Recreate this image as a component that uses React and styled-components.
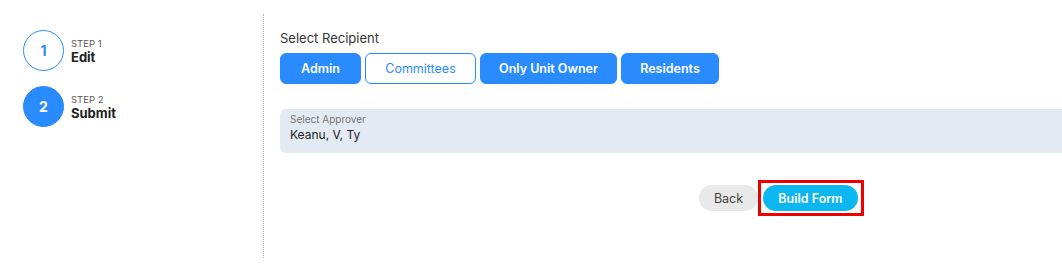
import React from "react";
import styled, { createGlobalStyle } from "styled-components";

const GlobalStyle = createGlobalStyle`
  body {
    margin: 0;
    background: #ffffff;
    font-family: "Inter", "Noto Sans", sans-serif;
    overflow: hidden;
  }
`;

const steps = [
  { num: 1, label: "STEP 1", title: "Edit", active: false },
  { num: 2, label: "STEP 2", title: "Submit", active: true },
];

const recipients = [
  { name: "Admin", width: 81, selected: true },
  { name: "Committees", width: 111, selected: false },
  { name: "Only Unit Owner", width: 137, selected: true },
  { name: "Residents", width: 98, selected: true },
];

function App() {
  return (
    <>
      <GlobalStyle />
      <Page>
        <Sidebar>
          {steps.map((s) => (
            <Step key={s.num}>
              <Circle $active={s.active}>{s.num}</Circle>
              <StepText>
                <StepLabel>{s.label}</StepLabel>
                <StepTitle>{s.title}</StepTitle>
              </StepText>
            </Step>
          ))}
        </Sidebar>
        <Main>
          <SectionLabel>Select Recipient</SectionLabel>
          <Recipients>
            {recipients.map((r) => (
              <RecipientButton
                key={r.name}
                $selected={r.selected}
                style={{ width: r.width }}
              >
                {r.name}
              </RecipientButton>
            ))}
          </Recipients>
          <ApproverBox>
            <ApproverLabel>Select Approver</ApproverLabel>
            <ApproverValue>Keanu, V, Ty</ApproverValue>
          </ApproverBox>
          <Footer>
            <BackButton>Back</BackButton>
            <Highlight>
              <BuildButton>Build Form</BuildButton>
            </Highlight>
          </Footer>
        </Main>
      </Page>
    </>
  );
}

const Page = styled.div`
  display: flex;
  align-items: flex-start;
  width: 100%;
`;

const Sidebar = styled.div`
  box-sizing: border-box;
  flex-shrink: 0;
  width: 264px;
  height: 244px;
  margin-top: 14px;
  padding: 16px 0 0 23px;
  border-right: 1px dotted #b5b5b5;
  display: flex;
  flex-direction: column;
  gap: 15px;
`;

const Step = styled.div`
  display: flex;
  align-items: center;
  gap: 7px;
`;

const Circle = styled.div`
  box-sizing: border-box;
  width: 41px;
  height: 41px;
  border-radius: 50%;
  display: flex;
  align-items: center;
  justify-content: center;
  font-size: 14px;
  font-weight: 700;
  border: 1px solid #2a8bff;
  background: ${(p) => (p.$active ? "#2a8bff" : "#ffffff")};
  color: ${(p) => (p.$active ? "#ffffff" : "#2a8bff")};
`;

const StepText = styled.div`
  display: flex;
  flex-direction: column;
  margin-top: 2px;
`;

const StepLabel = styled.span`
  font-size: 9.5px;
  color: #555;
  line-height: 12px;
`;

const StepTitle = styled.span`
  font-size: 13px;
  font-weight: 700;
  color: #222;
  line-height: 15px;
`;

const Main = styled.div`
  flex: 1;
  min-width: 0;
  padding: 30px 0 0 16px;
  display: flex;
  flex-direction: column;
`;

const SectionLabel = styled.div`
  font-size: 13px;
  color: #333;
  line-height: 16px;
  margin-bottom: 7px;
`;

const Recipients = styled.div`
  display: flex;
  gap: 4px;
`;

const RecipientButton = styled.button`
  box-sizing: border-box;
  height: 31px;
  border-radius: 6px;
  font-family: inherit;
  font-size: 12.5px;
  font-weight: ${(p) => (p.$selected ? 600 : 400)};
  border: 1px solid #2a8bff;
  background: ${(p) => (p.$selected ? "#2a8bff" : "#ffffff")};
  color: ${(p) => (p.$selected ? "#ffffff" : "#2a8bff")};
  padding: 0;
`;

const ApproverBox = styled.div`
  box-sizing: border-box;
  margin-top: 25px;
  height: 44px;
  border-radius: 6px 0 0 6px;
  background: #e4eaf4;
  padding: 3px 10px 0 10px;
  display: flex;
  flex-direction: column;
`;

const ApproverLabel = styled.span`
  font-size: 10px;
  color: #777;
  line-height: 14px;
`;

const ApproverValue = styled.span`
  font-size: 12px;
  color: #222;
  line-height: 18px;
`;

const Footer = styled.div`
  display: flex;
  align-items: center;
  margin-top: 27px;
  padding-left: 419px;
`;

const BackButton = styled.button`
  width: 59px;
  height: 26px;
  border: none;
  border-radius: 13px;
  background: #e9e9e9;
  color: #444;
  font-family: inherit;
  font-size: 12.5px;
  padding: 0;
`;

const Highlight = styled.div`
  display: flex;
  border: 3px solid #ee0000;
  padding: 2px 3px 2px 2px;
`;

const BuildButton = styled.button`
  width: 95px;
  height: 26px;
  border: none;
  border-radius: 13px;
  background: #0cb6f0;
  color: #ffffff;
  font-family: inherit;
  font-size: 12.5px;
  font-weight: 600;
  padding: 0;
`;

export default App;
